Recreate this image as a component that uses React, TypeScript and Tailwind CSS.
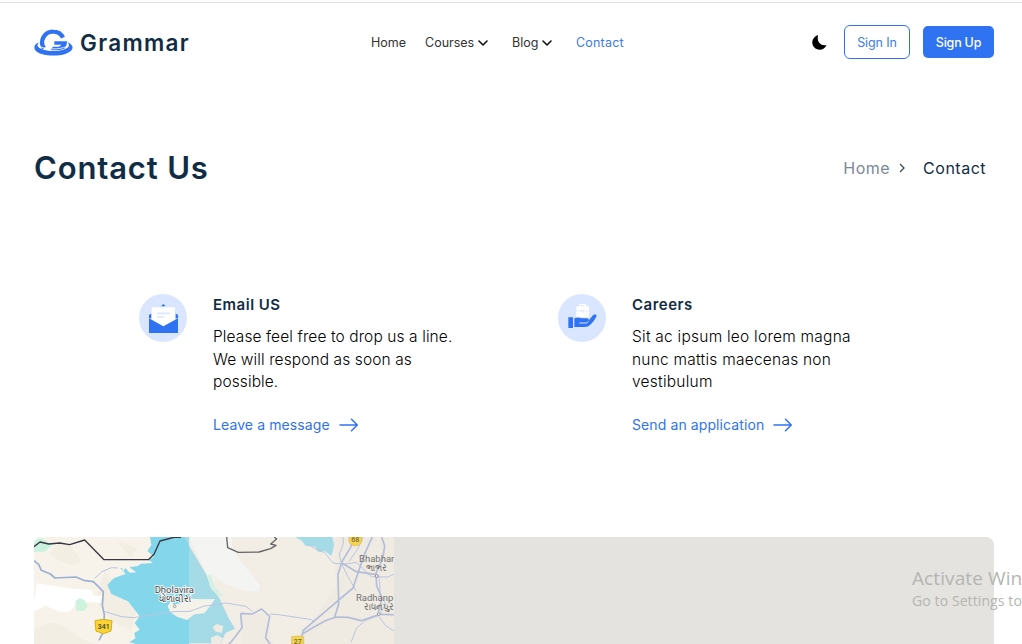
import type { ReactNode } from "react";

function Logo() {
  return (
    <svg width="39" height="27" viewBox="0 0 117 81" fill="none" className="shrink-0">
      <path d="M87 26A32.2 32.2 0 0 0 58 7.8A32.2 32.2 0 0 0 30 58" stroke="#2f73f2" strokeWidth="13" />
      <path d="M61 37h38c0 9-3 17-8 22-15 5-28 6-42 4l8-10h18l8-6H61z" fill="#2f73f2" />
      <path d="M15 40C-6 48-3 67 23 75c20 6 50 6 71 0 26-8 29-26 7-35 8 10 3 18-13 22-18 5-41 5-59 0C11 57 6 49 15 40z" fill="#2f73f2" />
      <path d="M18 53c22 9 57 9 79 0" stroke="#fff" strokeWidth="2.5" />
    </svg>
  );
}

function ChevronDown() {
  return (
    <svg width="10" height="7" viewBox="0 0 10 7" fill="none" className="mt-px shrink-0">
      <path d="m1 1 4 4 4-4" stroke="#111" strokeWidth="1.6" strokeLinecap="round" strokeLinejoin="round" />
    </svg>
  );
}

function Arrow() {
  return (
    <svg width="20" height="14" viewBox="0 0 20 14" fill="none" className="mt-px shrink-0">
      <path d="M1 7h17M12.5 1.2 18.3 7l-5.8 5.8" stroke="#2f73f2" strokeWidth="1.5" strokeLinecap="round" strokeLinejoin="round" />
    </svg>
  );
}

function MailIcon() {
  return (
    <svg width="48" height="48" viewBox="0 0 144 144" className="shrink-0">
      <circle cx="72" cy="72" r="72" fill="#dae6ff" />
      <path d="m66 37 7-7 7 7zM30 62l7-3v14h-7zM110 59l7 3v11h-7z" fill="#2f73f2" />
      <path d="M38 40h70v42L73 98 38 80z" fill="#fff" />
      <path d="M56 58h34M56 69h18" stroke="#dae6ff" strokeWidth="5" strokeLinecap="round" />
      <path d="m30 73 43 24 44-24v44H30z" fill="#2f73f2" />
    </svg>
  );
}

function CareerIcon() {
  return (
    <svg width="48" height="48" viewBox="0 0 144 144" className="shrink-0">
      <circle cx="72" cy="72" r="72" fill="#dae6ff" />
      <path d="M66 38v-6h16v6" fill="none" stroke="#fff" strokeWidth="4" />
      <rect x="55" y="37" width="38" height="33" rx="2" fill="#fff" />
      <path d="M55 51h13M80 51h13" stroke="#dae6ff" strokeWidth="2" />
      <circle cx="74" cy="51" r="4" fill="none" stroke="#dae6ff" strokeWidth="3" />
      <path d="M31 70h14v32H31zM49 73c8-4 15-3 21 0h17c6 0 7 6 3 9l13-16c5-6 12-5 13-1-5 13-14 23-24 31-5 4-15 3-43 3z" fill="#2f73f2" />
      <path d="M64 87h20c4 0 6-2 7-5" fill="none" stroke="#dae6ff" strokeWidth="3" />
    </svg>
  );
}

function MapTiles() {
  return (
    <svg width="360" height="107" viewBox="12 9 1080 321" fill="none" className="shrink-0">
      <rect x="12" y="9" width="1080" height="321" fill="#f7f3eb" />
      <path d="M12 290q50-45 100-5t85 45H12zM60 60q20-40 55-30l40 50-25 15-45-15zM225 110l40 50 60 40-20 90-60-30-50-60zM255 15l70 30-25 25z" fill="#f2eee4" />
      <path d="M477 9h615v321H477z" fill="#f2eee6" />
      <path d="M900 9h192v321H780l60-60 80-120zM630 240h80l20 90h-95z" fill="#efebe3" />
      <path d="M12 18q20-9 32 0l24 15-25 20H12z" fill="#c9f2df" />
      <path d="m20 148 55 8 50 8 60 4 5 17h28l-8 22-62-5-20 20-8 10-28 3-45-20-30 15h-5v-32l4-18z" fill="#fff" />
      <path d="m136 202 14-10 14 7 10 16-12 16-23-1z" fill="#cdf3df" />
      <path d="M360 9h117v321H318l-20-5 18-12-3-16 16-10-15-20 15-20-35-45-50-22-12-27 20-21 35-12-16-18 50-5 13-8 35-2-14-9 17-10-20-17 12-18z" fill="#84d6eb" />
      <path d="m268 84 17-1 17 20 17 12-20 1-13-14-6 10z" fill="#f8f4ec" />
      <path d="m477 9h-15l70 118 17 40 19 25 28 60 19 32-28 12-15 32h-95z" fill="#a5dae7" />
      <path d="M477 9h130l-3 35 38 50 48 60-4 18-42-2-40-17-32-1-35-21-30-60-10-20z" fill="#f4f4f3" />
      <path d="m530 125 13-4 10 35 30 33-22-7-18-17z" fill="#d8efe3" />
      <path d="m545 120 25 45 14 27 65 25V152h-60z" fill="#f2eee6" />
      <path d="m550 115 40 35 58 22 42-5-48-73-40-25z" fill="#f4f4f3" />
      <path d="m423 200 8 12 25-6 25-12 37 2 37-1-14 20-18 23-30 3-22 17-30-10-20-13-8-18z" fill="#f5f2ea" />
      <path d="m548 280 12-10 20 7-5 20-20-5zM542 312l18-9 18 9-8 18h-25z" fill="#eeebe4" />
      <path d="M795 9h112l5 23-7 34-20-14-20 2-10-16-28-2-12-16z" fill="#a5dae7" />
      <g strokeLinejoin="round">
        <path d="m194 133 22-20 28-12 20 1M225 233l50 15 35 3 72-11 50-7 48-1 43-16 65-9 60 10 18 15M720 240l25 2 95 14 14 6M834 29l20 15 30 12 25 31 30 4 40-6 45 43 50 1 30-15M939 9l1 21-12 30 6 28 20 40 24 42M1000 9l-18 38-25 35M1044 120l5 22 1 42 18 26-23 35-40 15-25 22-17 43M1047 248l20 27 25 16" stroke="#bbc5df" strokeWidth="3" />
        <path d="m12 80 14 11 8 18 27 11 14 12 63-3 23 10 29 4 30 30-3 42 6 27-3 52-13 25" stroke="#9cb0d4" strokeWidth="5" />
        <path d="m632 238 35 2 28-15 18 17 6 5-12 64 13 19M632 238l4 43-32 42-8 7M1027 9l-25 55-33 98-80 68-70 60-8 40M818 299l34-20 37-20 30-10 36 1 38 10 57-19 62 2M970 10l-8 30-26 43-12 37 2 90-12 39M937 88l42 25 60 9M1055 9l9 27-6 37-20 45 2 38 16 35-11 45" stroke="#b3bdd9" strokeWidth="5" />
        <path d="m12 38 18-14 26 6 33-3 30 5 45-14 58 59h133l17-16 18-40 45-12 18 1" stroke="#383642" strokeWidth="4" />
        <path d="m590 9 3 32 32 14 62-1 35-10 16-10-16-4 18-15-7-6" stroke="#666" strokeWidth="4" />
      </g>
      <path d="m195 260 25-4 26 4-3 31-23 8-22-8z" fill="#fcd535" stroke="#d5ac17" strokeWidth="3" />
      <path d="M957 9h38v13q-4 13-19 13t-19-13zM785 308q20-4 36 0v22h-36z" fill="#f4d451" stroke="#dab94a" strokeWidth="2" />
      <g fontFamily="Roboto, sans-serif" textAnchor="middle">
        <text x="221" y="285" fontSize="21" fontWeight="500" fill="#453f27">341</text>
        <text x="976" y="24" fontSize="21" fontWeight="500" fill="#786a35">68</text>
        <text x="803" y="330" fontSize="21" fontWeight="500" fill="#786a35">27</text>
        <g stroke="#fff" strokeWidth="5" paintOrder="stroke" fontSize="28.5">
          <text x="433" y="176" fill="#454545">Dholavira</text>
          <text x="434" y="204" fontSize="28" fill="#454545">ધોળાવીરા</text>
        </g>
        <g fill="#737373" fontSize="28.5">
          <text x="1040" y="84">Bhabhar</text>
          <text x="1039" y="111" fontSize="28">ભાભર</text>
          <text x="1034" y="200">Radhanp</text>
          <text x="1047" y="227" fontSize="28">રાધનપુર</text>
        </g>
      </g>
      <g fill="#fff" stroke="#777" strokeWidth="2">
        <circle cx="434" cy="217" r="4" />
        <circle cx="1040" cy="126" r="4" />
        <circle cx="1046" cy="240" r="4" />
      </g>
    </svg>
  );
}

type ContactProps = { icon: ReactNode; title: string; lines: string[]; action: string; spacing: string };

function ContactCard({ icon, title, lines, action, spacing }: ContactProps) {
  return (
    <section className="flex w-[419px] gap-[26px]">
      {icon}
      <div>
        <h2 className="text-[15px] leading-[22px] font-semibold tracking-[0.5px] text-[#112d46]">{title}</h2>
        <div className={`mt-[10px] text-[15.5px] leading-[22.5px] font-light text-black ${spacing}`}>
          {lines.map((line) => (
            <p key={line} className="whitespace-nowrap">{line}</p>
          ))}
        </div>
        <a href="#" className="mt-[20px] flex items-center gap-[9px] text-[14px] leading-[22px] tracking-[0.1px] whitespace-nowrap text-[#2f73f2]">
          {action}
          <Arrow />
        </a>
      </div>
    </section>
  );
}

export default function App() {
  return (
    <main className="relative h-[644px] w-[1022px] overflow-hidden bg-white pt-[2px] font-['Inter',sans-serif]">
      <header className="flex h-20 items-center border-t border-[#e2e2e2] pr-7 pb-px pl-[34px]">
        <a href="#" className="flex w-[337px] items-center gap-[7px]">
          <Logo />
          <span className="pt-px text-[22.5px] leading-7 font-semibold tracking-[1.3px] text-[#112d46]">Grammar</span>
        </a>
        <nav className="flex items-center pt-px text-[12.5px] leading-5 text-[#333]">
          <a href="#" className="w-[54px]">Home</a>
          <a href="#" className="flex w-[87px] items-center gap-1">Courses<ChevronDown /></a>
          <a href="#" className="flex w-[64px] items-center gap-1">Blog<ChevronDown /></a>
          <a href="#" className="tracking-[0.2px] text-[#397bf3]">Contact</a>
        </nav>
        <div className="ml-auto flex items-center">
          <svg width="15" height="15" viewBox="0 0 15 15" className="mr-[17px]">
            <path d="M6 0C2.7 1 .3 4.2.3 7.6c0 4 3.3 7.1 7.2 7.1 3.2 0 5.9-1.8 7-4.8C9 11.2 4.5 7.2 6 0z" fill="#000" />
          </svg>
          <button className="mr-[13px] h-[34px] w-[66px] rounded-md border border-[#2f73f2] pt-0.5 text-[12.5px] tracking-[-0.1px] text-[#397bf3]">Sign In</button>
          <button className="h-8 w-[71px] rounded-[5px] bg-[#2f73f2] pt-0.5 text-[12.5px] font-medium tracking-[-0.2px] text-white">Sign Up</button>
        </div>
      </header>
      <div className="mt-[62px] flex h-12 items-center justify-between pr-9 pl-[34px]">
        <h1 className="text-[31px] leading-10 font-semibold tracking-[0.85px] text-[#112d46]">Contact Us</h1>
        <div className="flex items-center text-[16px] leading-6 tracking-[0.5px]">
          <span className="text-[#79889a]">Home</span>
          <svg width="7" height="10" viewBox="0 0 7 10" fill="none" className="mr-[17px] ml-[9px]">
            <path d="m1 1 4 4-4 4" stroke="#354b61" strokeWidth="1.3" />
          </svg>
          <span className="text-[#112d46]">Contact</span>
        </div>
      </div>
      <div className="mt-[102px] flex h-[243px] pl-[139px]">
        <ContactCard icon={<MailIcon />} title="Email US" lines={["Please feel free to drop us a line.", "We will respond as soon as", "possible."]} action="Leave a message" spacing="tracking-[0.1px]" />
        <ContactCard icon={<CareerIcon />} title="Careers" lines={["Sit ac ipsum leo lorem magna", "nunc mattis maecenas non", "vestibulum"]} action="Send an application" spacing="tracking-[0.24px]" />
      </div>
      <div className="ml-[34px] flex h-[107px] w-[960px] overflow-hidden rounded-t-lg bg-[#e4e3df]">
        <MapTiles />
      </div>
      <aside className="absolute top-[566px] left-[912px] font-['Open_Sans',sans-serif] whitespace-nowrap text-[#b5b5b2]">
        <p className="text-[19px] leading-6 tracking-[0.1px]">Activate Windows</p>
        <p className="text-[14px] leading-[21px] tracking-[0.1px]">Go to Settings to activate Windows.</p>
      </aside>
    </main>
  );
}
